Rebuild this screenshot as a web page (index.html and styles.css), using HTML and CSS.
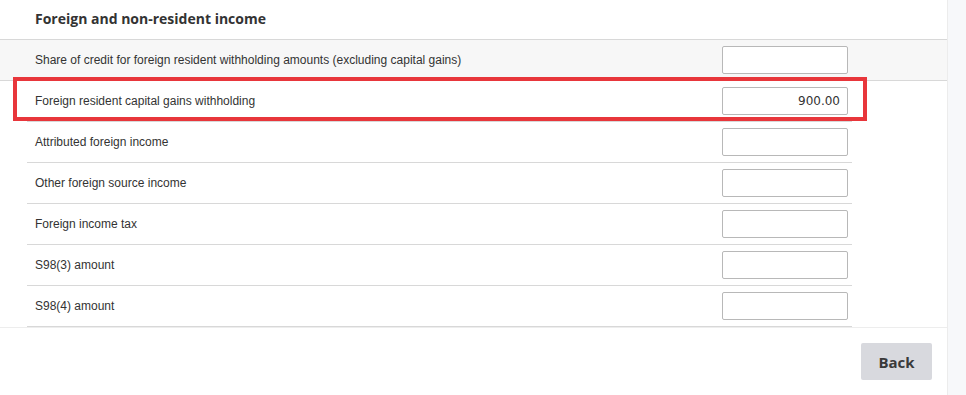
FILE: index.html
```html
<!DOCTYPE html>
<html lang="en">
<head>
<meta charset="utf-8">
<title>Foreign and non-resident income</title>
<link rel="stylesheet" href="styles.css">
</head>
<body>
<div class="page">
  <main class="panel">
    <h2 class="panel-title">Foreign and non-resident income</h2>
    <div class="rows">
      <div class="row row-shaded">
        <label class="row-label">Share of credit for foreign resident withholding amounts (excluding capital gains)</label>
        <input class="amount" type="text" value="">
      </div>
      <div class="row row-highlight">
        <div class="row-inner">
          <label class="row-label">Foreign resident capital gains withholding</label>
          <input class="amount" type="text" value="900.00">
        </div>
        <div class="highlight-box"></div>
      </div>
      <div class="row">
        <div class="row-inner">
          <label class="row-label">Attributed foreign income</label>
          <input class="amount" type="text" value="">
        </div>
      </div>
      <div class="row">
        <div class="row-inner">
          <label class="row-label">Other foreign source income</label>
          <input class="amount" type="text" value="">
        </div>
      </div>
      <div class="row">
        <div class="row-inner">
          <label class="row-label">Foreign income tax</label>
          <input class="amount" type="text" value="">
        </div>
      </div>
      <div class="row">
        <div class="row-inner">
          <label class="row-label">S98(3) amount</label>
          <input class="amount" type="text" value="">
        </div>
      </div>
      <div class="row">
        <div class="row-inner">
          <label class="row-label">S98(4) amount</label>
          <input class="amount" type="text" value="">
        </div>
      </div>
    </div>
    <div class="footer">
      <button class="btn-back" type="button">Back</button>
    </div>
  </main>
  <aside class="side"></aside>
</div>
</body>
</html>
```

FILE: styles.css
```css
* { box-sizing: border-box; }

html, body {
  margin: 0;
  padding: 0;
  height: 100%;
}

body {
  background: #f7f8fa;
  font-family: "Liberation Sans", Arial, sans-serif;
  color: #333;
}

.page {
  display: flex;
  height: 395px;
  overflow: hidden;
}

.panel {
  width: 948px;
  flex: none;
  background: #fff;
  border-right: 1px solid #ececec;
  display: flex;
  flex-direction: column;
}

.side {
  flex: 1;
  background: #f7f8fa;
}

.panel-title {
  margin: 0;
  height: 40px;
  padding: 9px 0 0 35px;
  font-family: "Open Sans", sans-serif;
  font-weight: 700;
  font-size: 14px;
  line-height: 19px;
  color: #333;
  border-bottom: 1px solid #d8d8d8;
}

.rows {
  display: flex;
  flex-direction: column;
}

.row {
  height: 41px;
  display: flex;
}

.row-shaded {
  background: #f7f7f7;
  border-bottom: 1px solid #d8d8d8;
  align-items: center;
  padding-left: 35px;
  justify-content: space-between;
  padding-right: 99px;
}

.row-inner {
  margin-left: 27px;
  width: 825px;
  height: 41px;
  border-bottom: 1px solid #d8d8d8;
  display: flex;
  align-items: center;
  justify-content: space-between;
  padding-left: 8px;
  padding-right: 4px;
}

.row-label {
  font-size: 12px;
  line-height: 14px;
  color: #333;
}

.amount {
  width: 126px;
  height: 28px;
  border: 1px solid #b8b8b8;
  border-radius: 2px;
  background: #fff;
  font-family: "DejaVu Sans", Verdana, sans-serif;
  font-size: 12px;
  color: #333;
  text-align: right;
  padding: 0 7px 0 6px;
  margin: 0;
  outline: none;
}

.row-highlight {
  position: relative;
}

.highlight-box {
  position: absolute;
  top: -4px;
  left: 13px;
  width: 854px;
  height: 44px;
  border: 4px solid #e8363b;
  pointer-events: none;
}

.footer {
  margin-top: 0;
  border-top: 1px solid #ededed;
  display: flex;
  justify-content: flex-end;
  padding: 15px 15px 0 0;
}

.btn-back {
  width: 71px;
  height: 37px;
  border: none;
  border-radius: 2px;
  background: #d8d9de;
  font-family: "Open Sans", sans-serif;
  font-weight: 700;
  font-size: 15px;
  color: #3a3a3a;
  padding: 0;
  cursor: pointer;
}
```
